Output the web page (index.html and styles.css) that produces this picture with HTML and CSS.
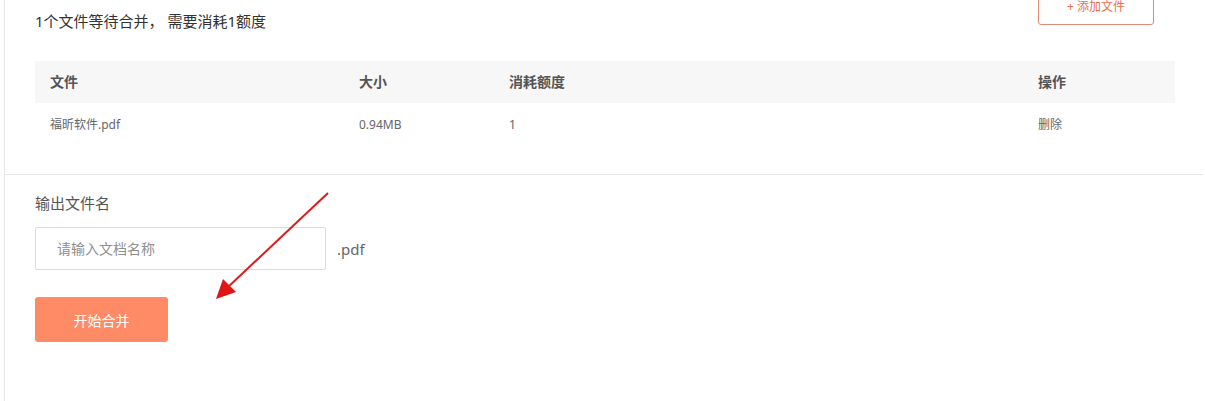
FILE: index.html
```html
<!DOCTYPE html>
<html lang="zh-CN">
<head>
<meta charset="utf-8">
<title>合并文件</title>
<link rel="stylesheet" href="styles.css">
</head>
<body>
<div class="page">
  <section class="files">
    <div class="top-row">
      <p class="summary">1个文件等待合并， 需要消耗1额度</p>
      <button class="add-btn" type="button">+ 添加文件</button>
    </div>
    <div class="table">
      <div class="thead">
        <div class="cell">文件</div>
        <div class="cell">大小</div>
        <div class="cell">消耗额度</div>
        <div class="cell">操作</div>
      </div>
      <div class="trow">
        <div class="cell">福昕软件.pdf</div>
        <div class="cell">0.94MB</div>
        <div class="cell">1</div>
        <div class="cell">删除</div>
      </div>
    </div>
  </section>
  <section class="output">
    <label class="out-label" for="fname">输出文件名</label>
    <div class="input-row">
      <input id="fname" class="name-input" type="text" placeholder="请输入文档名称">
      <span class="ext">.pdf</span>
    </div>
    <button class="start-btn" type="button">开始合并</button>
  </section>
  <svg class="arrow" width="140" height="130" viewBox="0 0 140 130">
    <line x1="128" y1="13" x2="27" y2="108" stroke="#dc1c1c" stroke-width="2"/>
    <polygon points="16,119 23,99 36,112" fill="#e01515"/>
  </svg>
</div>
</body>
</html>
```
FILE: styles.css
```css
* { box-sizing: border-box; }
html, body { margin: 0; padding: 0; background: #fff; overflow: hidden; }
body {
  font-family: "Noto Sans", "Noto Sans CJK SC", sans-serif;
  color: #333;
  height: 401px;
}
.page {
  position: relative;
  margin-left: 4px;
  margin-right: 2px;
  margin-top: -13px;
  border-left: 1px solid #e6e6e6;
  height: 414px;
}
.files {
  padding: 0 28px 27px 30px;
  border-bottom: 1px solid #e6e6e6;
}
.top-row {
  display: flex;
  justify-content: space-between;
  align-items: flex-start;
  padding-right: 21px;
}
.summary {
  margin: 25px 0 0;
  font-size: 15px;
  line-height: 18px;
  color: #333;
}
.add-btn {
  width: 116px;
  height: 38px;
  border: 1px solid #de8a74;
  border-radius: 3px;
  background: #fff;
  color: #e8704c;
  font-family: inherit;
  font-size: 12px;
  line-height: 16px;
  padding: 11px 0 0;
  display: flex;
  justify-content: center;
  align-items: flex-start;
}
.table {
  margin-top: 31px;
  width: 1140px;
}
.thead, .trow {
  display: grid;
  grid-template-columns: 309px 150px 529px 1fr;
  align-items: center;
}
.thead {
  height: 42px;
  background: #f7f7f7;
  font-size: 14px;
  font-weight: bold;
  color: #555;
}
.trow {
  height: 44px;
  font-size: 12px;
  color: #666;
}
.cell {
  padding-left: 15px;
  line-height: 18px;
}
.output {
  padding: 19px 0 0 30px;
}
.out-label {
  display: block;
  font-size: 15px;
  line-height: 18px;
  color: #555;
}
.input-row {
  display: flex;
  align-items: center;
  gap: 11px;
  margin-top: 15px;
}
.name-input {
  width: 291px;
  height: 43px;
  border: 1px solid #dcdcdc;
  border-radius: 2px;
  padding: 0 0 0 21px;
  font-family: inherit;
  font-size: 14px;
  color: #333;
  outline: none;
}
.name-input::placeholder { color: #8f8f8f; }
.ext {
  font-size: 15px;
  color: #666;
  line-height: 18px;
}
.start-btn {
  margin-top: 27px;
  width: 133px;
  height: 45px;
  border: none;
  border-radius: 3px;
  background: #ff8b66;
  color: #fff;
  font-family: inherit;
  font-size: 14px;
  display: block;
}
.arrow {
  position: absolute;
  left: 195px;
  top: 193px;
}
```
